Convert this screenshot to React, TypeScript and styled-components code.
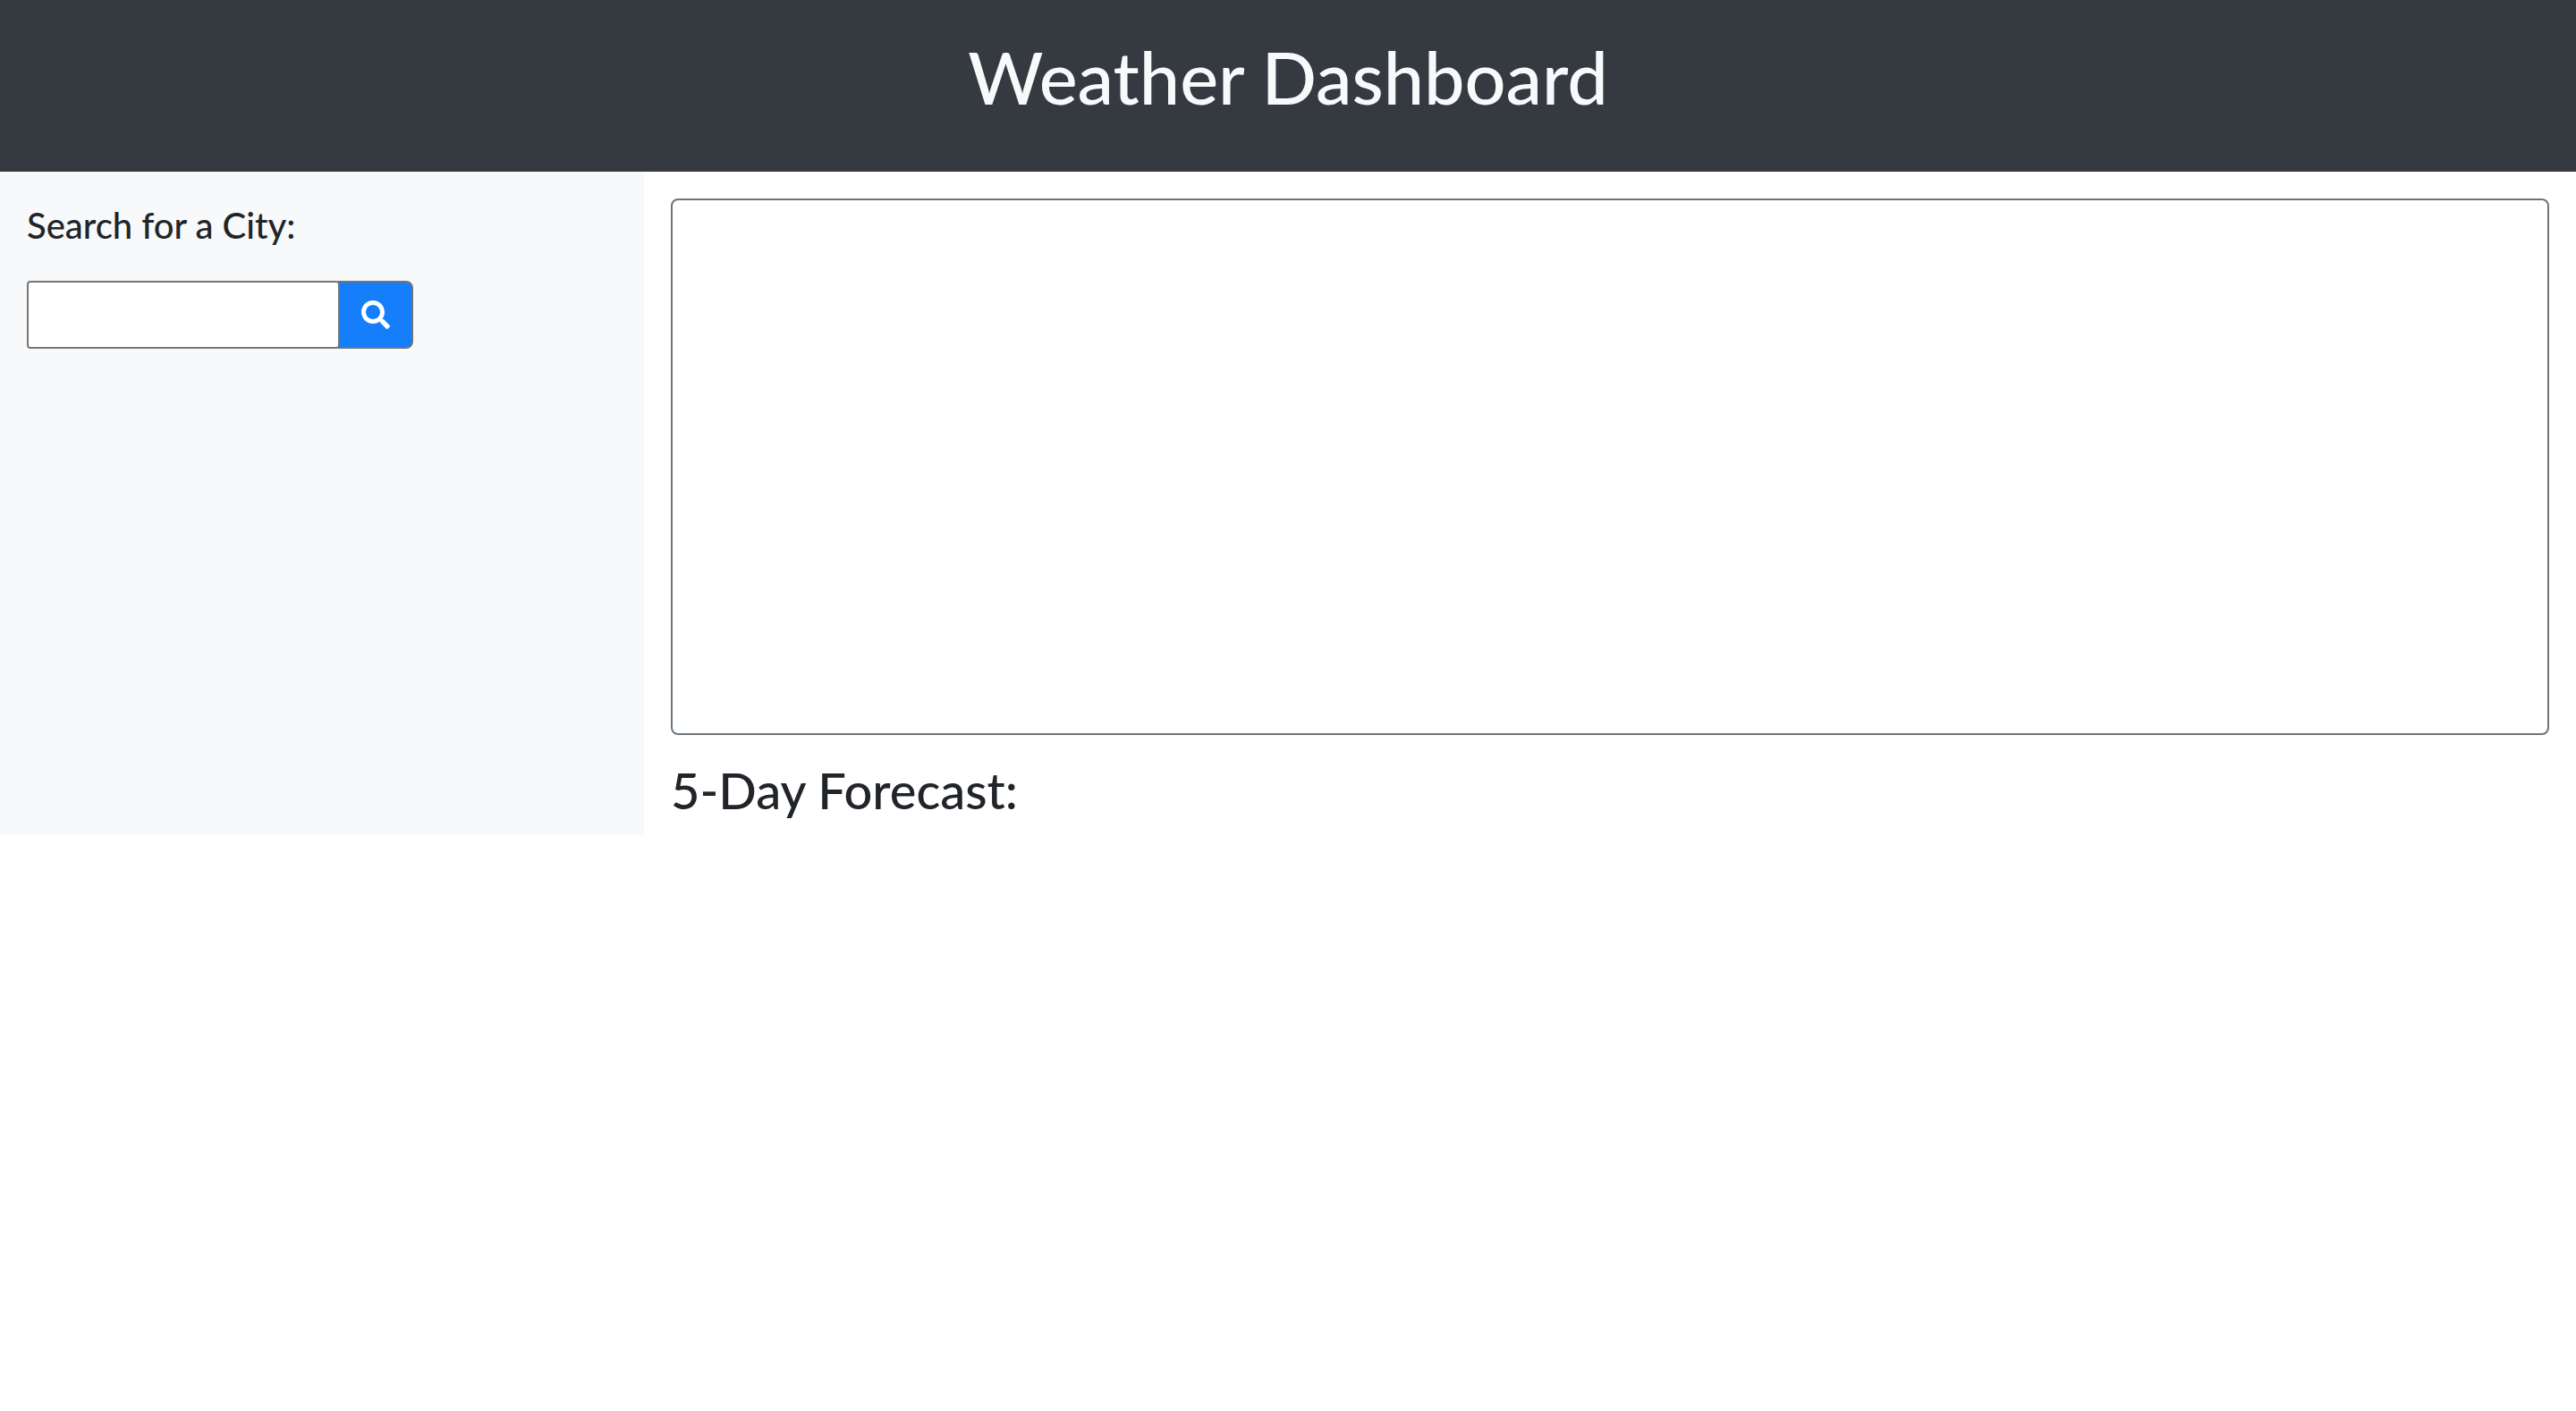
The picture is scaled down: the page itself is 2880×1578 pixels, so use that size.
import React from "react";
import styled, { createGlobalStyle } from "styled-components";
import { FaSearch } from "react-icons/fa";

const GlobalStyle = createGlobalStyle`
  *, *::before, *::after { box-sizing: border-box; }
  body {
    margin: 0;
    background: #fff;
    color: #212529;
    font-family: Lato, "Liberation Sans", sans-serif;
    font-size: 32px;
    line-height: 48px;
  }
`;

const Header = styled.header`
  display: flex;
  justify-content: center;
  padding: 38px 32px 58px;
  background: #343a40;
`;

const Title = styled.h1`
  margin: 0;
  color: #f8f9fa;
  font-size: 81px;
  font-weight: 500;
  line-height: 96px;
`;

const Layout = styled.div`
  display: grid;
  grid-template-columns: 1fr 3fr;
`;

const Sidebar = styled.aside`
  padding: 36px 30px;
  background: #f8f9fa;
`;

const SearchForm = styled.form`
  display: flex;
  flex-direction: column;
  gap: 38px;
`;

const SearchLabel = styled.label`
  font-size: 40px;
  font-weight: 500;
  line-height: 48px;
`;

const SearchGroup = styled.div`
  display: flex;
  width: 432px;
`;

const SearchInput = styled.input`
  flex: 1;
  min-width: 0;
  height: 76px;
  padding: 12px 24px;
  border: 2px solid #767676;
  border-radius: 4px;
  background: #fff;
  color: #495057;
  font: inherit;
`;

const SearchButton = styled.button`
  display: flex;
  align-items: center;
  justify-content: center;
  width: 84px;
  margin-left: -2px;
  padding: 0;
  border: 2px solid #6c757d;
  border-radius: 0 8px 8px 0;
  background: #157efb;
  color: #fff;
  font-size: 32px;
  cursor: pointer;
`;

const Main = styled.main`
  padding: 30px 30px 18px;
`;

const CurrentWeather = styled.section`
  min-height: 600px;
  margin-bottom: 30px;
  border: 2px solid #6c757d;
  border-radius: 8px;
`;

const ForecastTitle = styled.h2`
  margin: 0;
  font-size: 56px;
  font-weight: 500;
  line-height: 64px;
`;

export default function App() {
  return (
    <>
      <GlobalStyle />
      <Header>
        <Title>Weather Dashboard</Title>
      </Header>
      <Layout>
        <Sidebar>
          <SearchForm onSubmit={(event) => event.preventDefault()}>
            <SearchLabel htmlFor="city">Search for a City:</SearchLabel>
            <SearchGroup>
              <SearchInput id="city" type="text" />
              <SearchButton type="submit" aria-label="Search">
                <FaSearch aria-hidden="true" />
              </SearchButton>
            </SearchGroup>
          </SearchForm>
        </Sidebar>
        <Main>
          <CurrentWeather aria-label="Current weather" />
          <ForecastTitle>5-Day Forecast:</ForecastTitle>
        </Main>
      </Layout>
    </>
  );
}
